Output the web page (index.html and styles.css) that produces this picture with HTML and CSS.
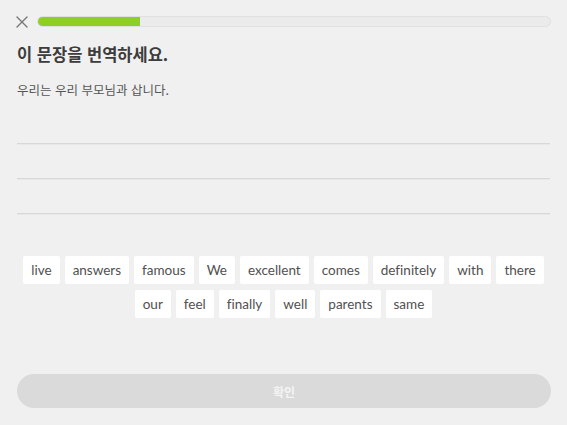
FILE: index.html
```html
<!DOCTYPE html>
<html lang="ko">
<head>
<meta charset="utf-8">
<title>문장 번역</title>
<link rel="stylesheet" href="styles.css">
</head>
<body>
<div class="app">
  <header class="top">
    <button class="close" aria-label="닫기">
      <svg width="12" height="12" viewBox="0 0 12 12"><path d="M1 1 L11 11 M11 1 L1 11" stroke="#777" stroke-width="1.4" fill="none" stroke-linecap="round"/></svg>
    </button>
    <div class="progress"><div class="fill" style="width:20%"></div></div>
  </header>
  <h1 class="title">이 문장을 번역하세요.</h1>
  <p class="prompt">우리는 우리 부모님과 삽니다.</p>
  <div class="answer">
    <div class="line"></div>
    <div class="line"></div>
    <div class="line"></div>
  </div>
  <div class="bank">
    <span class="tile">live</span>
    <span class="tile">answers</span>
    <span class="tile">famous</span>
    <span class="tile">We</span>
    <span class="tile">excellent</span>
    <span class="tile">comes</span>
    <span class="tile">definitely</span>
    <span class="tile">with</span>
    <span class="tile">there</span>
    <span class="tile">our</span>
    <span class="tile">feel</span>
    <span class="tile">finally</span>
    <span class="tile">well</span>
    <span class="tile">parents</span>
    <span class="tile">same</span>
  </div>
  <button class="check">확인</button>
</div>
</body>
</html>
```
FILE: styles.css
```css
html, body {
  margin: 0;
  padding: 0;
  background: #f0f0f0;
}
body {
  font-family: "Noto Sans CJK KR", "Noto Sans", sans-serif;
  color: #3c3c3c;
}
.app {
  padding: 0 17px;
  display: flex;
  flex-direction: column;
}
.top {
  display: flex;
  align-items: center;
  gap: 9px;
  padding-top: 16px;
  height: 11px;
}
.close {
  border: 0;
  background: none;
  padding: 0;
  margin-left: -1px;
  width: 12px;
  height: 12px;
  display: flex;
}
.progress {
  flex: 1;
  height: 11px;
  box-sizing: border-box;
  border: 1px solid #e0e0e0;
  background: #ebebeb;
  border-radius: 6px;
  overflow: hidden;
  margin-right: -1px;
}
.fill {
  height: 100%;
  background: #8fcf23;
}
.title {
  margin: 15px 0 0;
  font-size: 16.5px;
  line-height: 24px;
  font-weight: 700;
  color: #3c3c3c;
}
.prompt {
  margin: 15px 0 0;
  font-size: 12.5px;
  line-height: 18px;
  color: #555;
}
.answer {
  margin-top: 10px;
  display: flex;
  flex-direction: column;
}
.line {
  height: 34px;
  border-bottom: 1px solid #d8d8d8;
  box-shadow: 0 1px 0 #e8e8e8;
}
.bank {
  margin-top: 42px;
  display: flex;
  flex-wrap: wrap;
  justify-content: center;
  gap: 6px 5px;
  padding: 0 6px;
}
.tile {
  font-family: "Lato", "Open Sans", sans-serif;
  font-variant-ligatures: none;
  font-size: 13.5px;
  color: #505050;
  background: #fff;
  border-radius: 2px;
  height: 28px;
  line-height: 28px;
  padding: 0 8px;
}
.check {
  margin-top: 56px;
  height: 34px;
  border: 0;
  border-radius: 17px;
  background: #dadada;
  color: #f4f4f4;
  font-family: "Noto Sans CJK KR", sans-serif;
  font-weight: 700;
  font-size: 12px;
  margin-left: 0;
  margin-right: -1px;
}
```
